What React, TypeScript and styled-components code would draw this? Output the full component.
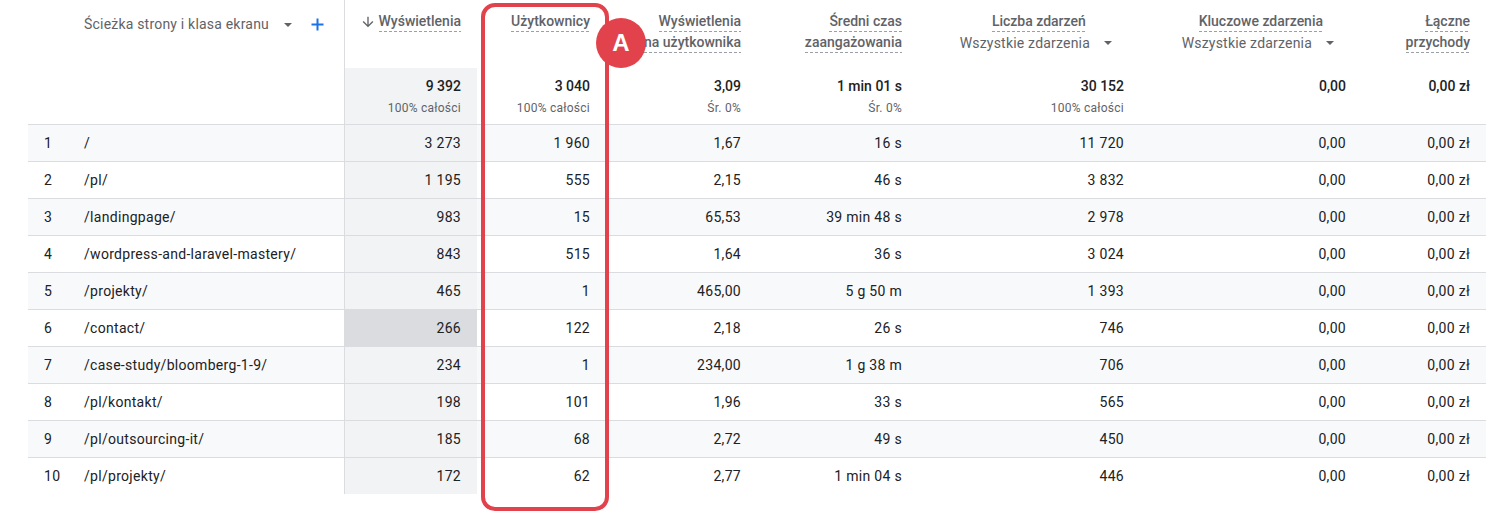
import React from "react";
import styled, { createGlobalStyle, css } from "styled-components";

const GlobalStyle = createGlobalStyle`
  html, body { margin: 0; padding: 0; background: #ffffff; }
  body { font-family: Roboto, "Liberation Sans", Arial, sans-serif; }
`;

const COLS = "56px 260px 133px 129px 151px 161px 222px 222px 124px";
const ACCENT = "#e2424b";
const BORDER = "#dadce0";

const Page = styled.div`
  padding-left: 28px;
  width: 1468px;
  min-height: 515px;
`;

const Table = styled.div`
  position: relative;
  width: 1458px;
  padding-bottom: 21px;
`;

const Row = styled.div<{ $kind: "head" | "total" | "data"; $striped?: boolean }>`
  display: grid;
  grid-template-columns: ${COLS};
  background: ${(p) => (p.$striped ? "#f8f9fa" : "#ffffff")};
  ${(p) =>
    p.$kind === "head" &&
    css`
      height: 68px;
      align-items: stretch;
    `}
  ${(p) =>
    p.$kind === "total" &&
    css`
      height: 56px;
      align-items: stretch;
    `}
  ${(p) =>
    p.$kind === "data" &&
    css`
      height: 37px;
      border-top: 1px solid ${BORDER};
      box-sizing: border-box;
      align-items: stretch;
    `}
`;

type Tone = "plain" | "metric" | "active";

const Cell = styled.div<{ $tone?: Tone; $divider?: boolean; $right?: boolean }>`
  box-sizing: border-box;
  display: flex;
  align-items: center;
  justify-content: ${(p) => (p.$right ? "flex-end" : "flex-start")};
  padding-right: ${(p) => (p.$right ? "16px" : "0")};
  font-size: 14px;
  letter-spacing: 0.3px;
  color: #202124;
  white-space: nowrap;
  background: ${(p) =>
    p.$tone === "metric" ? "#f1f3f4" : p.$tone === "active" ? "#dadce0" : "transparent"};
  border-left: ${(p) => (p.$divider ? `1px solid ${BORDER}` : "none")};
`;

const IndexCell = styled(Cell)`
  padding-left: 16px;
`;

const HeadCell = styled.div<{ $divider?: boolean; $extraRight?: number }>`
  box-sizing: border-box;
  display: flex;
  flex-direction: column;
  align-items: flex-end;
  padding: 11px ${(p) => 16 + (p.$extraRight || 0)}px 0 0;
  border-left: ${(p) => (p.$divider ? `1px solid ${BORDER}` : "none")};
`;

const DimHead = styled.div`
  grid-column: 2 / 3;
  display: flex;
  align-items: center;
  height: 20px;
  margin-top: 14px;
  font-size: 14px;
  letter-spacing: 0.2px;
  color: #5f6368;
  white-space: nowrap;
`;

const Caret = styled.span<{ $gap: number; $after?: number }>`
  display: inline-block;
  width: 0;
  height: 0;
  border-left: 4px solid transparent;
  border-right: 4px solid transparent;
  border-top: 4px solid #5f6368;
  margin-left: ${(p) => p.$gap}px;
  margin-right: ${(p) => p.$after || 0}px;
  margin-top: 1px;
`;

const PlusIcon = styled.svg`
  margin-left: 19px;
  flex: none;
`;

const TitleLine = styled.span`
  display: flex;
  align-items: center;
  width: fit-content;
  line-height: 20px;
  height: 21px;
  box-sizing: border-box;
  font-size: 14px;
  font-weight: 500;
  color: #5f6368;
  white-space: nowrap;
`;

const Dashed = styled.span`
  display: inline-block;
  line-height: 20px;
  height: 21px;
  box-sizing: border-box;
  background-image: linear-gradient(to right, #9aa0a6 60%, transparent 0);
  background-size: 5px 1px;
  background-repeat: repeat-x;
  background-position: left bottom;
`;

const SortArrow = styled.svg`
  margin-right: 3px;
  flex: none;
`;

const Stack = styled.div`
  display: flex;
  flex-direction: column;
  align-items: center;
`;

const SubLine = styled.span`
  display: flex;
  align-items: center;
  line-height: 20px;
  height: 21px;
  font-size: 14px;
  letter-spacing: 0.2px;
  color: #5f6368;
  white-space: nowrap;
`;

const TotalCell = styled.div<{ $tone?: Tone; $divider?: boolean }>`
  box-sizing: border-box;
  display: flex;
  flex-direction: column;
  align-items: flex-end;
  padding: 8px 16px 0 0;
  background: ${(p) => (p.$tone === "metric" ? "#f1f3f4" : "transparent")};
  border-left: ${(p) => (p.$divider ? `1px solid ${BORDER}` : "none")};
`;

const TotalValue = styled.span`
  font-size: 14px;
  line-height: 20px;
  font-weight: 500;
  color: #202124;
  white-space: nowrap;
`;

const TotalNote = styled.span`
  margin-top: 4px;
  font-size: 12px;
  line-height: 16px;
  letter-spacing: 0.25px;
  color: #5f6368;
  white-space: nowrap;
`;

const Highlight = styled.div`
  position: absolute;
  left: 453px;
  top: 3px;
  width: 128px;
  height: 508px;
  box-sizing: border-box;
  border: 4px solid ${ACCENT};
  border-radius: 14px;
  pointer-events: none;
`;

const Badge = styled.div`
  position: absolute;
  left: 568px;
  top: 18px;
  width: 50px;
  height: 50px;
  border-radius: 50%;
  background: ${ACCENT};
  color: #ffffff;
  display: flex;
  align-items: center;
  justify-content: center;
  font-family: "Liberation Sans", Arial, sans-serif;
  font-weight: 700;
  font-size: 24px;
  line-height: 1;
`;

type RowData = {
  path: string;
  views: string;
  users: string;
  vpu: string;
  time: string;
  events: string;
};

const nb = (s: string) => s.replace(/ /g, "\u00a0");

const rows: RowData[] = [
  { path: "/", views: "3 273", users: "1 960", vpu: "1,67", time: "16 s", events: "11 720" },
  { path: "/pl/", views: "1 195", users: "555", vpu: "2,15", time: "46 s", events: "3 832" },
  { path: "/landingpage/", views: "983", users: "15", vpu: "65,53", time: "39 min 48 s", events: "2 978" },
  { path: "/wordpress-and-laravel-mastery/", views: "843", users: "515", vpu: "1,64", time: "36 s", events: "3 024" },
  { path: "/projekty/", views: "465", users: "1", vpu: "465,00", time: "5 g 50 m", events: "1 393" },
  { path: "/contact/", views: "266", users: "122", vpu: "2,18", time: "26 s", events: "746" },
  { path: "/case-study/bloomberg-1-9/", views: "234", users: "1", vpu: "234,00", time: "1 g 38 m", events: "706" },
  { path: "/pl/kontakt/", views: "198", users: "101", vpu: "1,96", time: "33 s", events: "565" },
  { path: "/pl/outsourcing-it/", views: "185", users: "68", vpu: "2,72", time: "49 s", events: "450" },
  { path: "/pl/projekty/", views: "172", users: "62", vpu: "2,77", time: "1 min 04 s", events: "446" },
];

const totals: { value: string; note?: string }[] = [
  { value: "9 392", note: "100% całości" },
  { value: "3 040", note: "100% całości" },
  { value: "3,09", note: "Śr. 0%" },
  { value: "1 min 01 s", note: "Śr. 0%" },
  { value: "30 152", note: "100% całości" },
  { value: "0,00" },
  { value: "0,00 zł" },
];

const ACTIVE_ROW = 5;

export default function App() {
  return (
    <>
      <GlobalStyle />
      <Page>
        <Table>
          <Row $kind="head">
            <div />
            <DimHead>
              Ścieżka strony i klasa ekranu
              <Caret $gap={15} />
              <PlusIcon width="13" height="13" viewBox="0 0 13 13">
                <path d="M6.5 0.5v12M0.5 6.5h12" stroke="#1a73e8" strokeWidth="2" fill="none" />
              </PlusIcon>
            </DimHead>
            <HeadCell $divider>
              <TitleLine>
                <SortArrow width="16" height="16" viewBox="0 0 24 24">
                  <path
                    d="M20 12l-1.41-1.41L13 16.17V4h-2v12.17l-5.58-5.59L4 12l8 8 8-8z"
                    fill="#5f6368"
                  />
                </SortArrow>
                <Dashed>Wyświetlenia</Dashed>
              </TitleLine>
            </HeadCell>
            <HeadCell>
              <TitleLine>
                <Dashed>Użytkownicy</Dashed>
              </TitleLine>
            </HeadCell>
            <HeadCell>
              <TitleLine>
                <Dashed>Wyświetlenia</Dashed>
              </TitleLine>
              <TitleLine>
                <Dashed>na użytkownika</Dashed>
              </TitleLine>
            </HeadCell>
            <HeadCell>
              <TitleLine>
                <Dashed>Średni czas</Dashed>
              </TitleLine>
              <TitleLine>
                <Dashed>zaangażowania</Dashed>
              </TitleLine>
            </HeadCell>
            <HeadCell $extraRight={6}>
              <Stack>
                <TitleLine>
                  <Dashed>Liczba zdarzeń</Dashed>
                </TitleLine>
                <SubLine>
                  Wszystkie zdarzenia
                  <Caret $gap={14} $after={6} />
                </SubLine>
              </Stack>
            </HeadCell>
            <HeadCell $extraRight={6}>
              <Stack>
                <TitleLine>
                  <Dashed>Kluczowe zdarzenia</Dashed>
                </TitleLine>
                <SubLine>
                  Wszystkie zdarzenia
                  <Caret $gap={14} $after={6} />
                </SubLine>
              </Stack>
            </HeadCell>
            <HeadCell>
              <TitleLine>
                <Dashed>Łączne</Dashed>
              </TitleLine>
              <TitleLine>
                <Dashed>przychody</Dashed>
              </TitleLine>
            </HeadCell>
          </Row>

          <Row $kind="total">
            <div />
            <div />
            {totals.map((t, i) => (
              <TotalCell key={i} $tone={i === 0 ? "metric" : "plain"} $divider={i === 0}>
                <TotalValue>{nb(t.value)}</TotalValue>
                {t.note && <TotalNote>{t.note}</TotalNote>}
              </TotalCell>
            ))}
          </Row>

          {rows.map((r, i) => (
            <Row key={r.path} $kind="data" $striped={i % 2 === 0}>
              <IndexCell>{i + 1}</IndexCell>
              <Cell>{r.path}</Cell>
              <Cell $right $divider $tone={i === ACTIVE_ROW ? "active" : "metric"}>
                {nb(r.views)}
              </Cell>
              <Cell $right>{nb(r.users)}</Cell>
              <Cell $right>{r.vpu}</Cell>
              <Cell $right>{nb(r.time)}</Cell>
              <Cell $right>{nb(r.events)}</Cell>
              <Cell $right>0,00</Cell>
              <Cell $right>{nb("0,00 zł")}</Cell>
            </Row>
          ))}

          <Highlight />
          <Badge>A</Badge>
        </Table>
      </Page>
    </>
  );
}
